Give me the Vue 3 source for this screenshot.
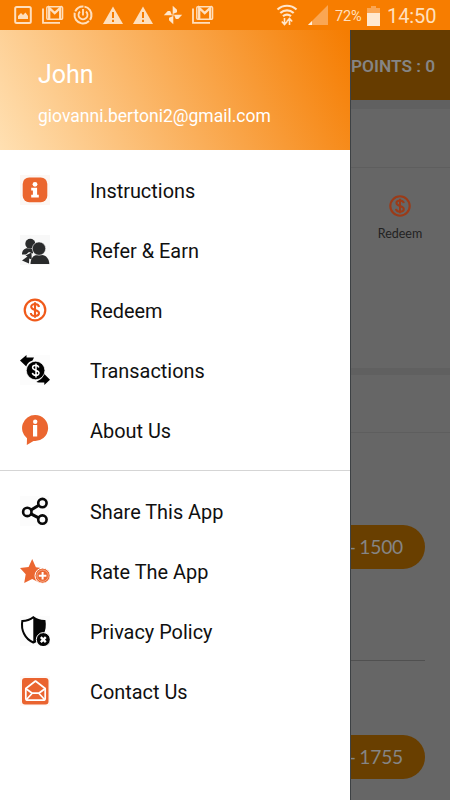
<script setup>
const statusIcons = ['image', 'mail', 'power', 'warn', 'warn', 'fan', 'mail']

const groups = [
  [
    { icon: 'info', label: 'Instructions' },
    { icon: 'refer', label: 'Refer & Earn' },
    { icon: 'redeem', label: 'Redeem' },
    { icon: 'transfer', label: 'Transactions' },
    { icon: 'about', label: 'About Us' },
  ],
  [
    { icon: 'share', label: 'Share This App' },
    { icon: 'rate', label: 'Rate The App' },
    { icon: 'privacy', label: 'Privacy Policy' },
    { icon: 'contact', label: 'Contact Us' },
  ],
]
</script>

<template>
  <div class="screen">
    <header class="status">
      <div class="notifications">
        <svg v-for="(s, i) in statusIcons" :key="i" width="30" height="30" viewBox="0 0 30 30">
          <g v-if="s === 'image'">
            <rect x="7.2" y="7" width="15.6" height="16" rx="1.5" fill="none" stroke="#ffdfbd" stroke-width="2" />
            <path d="M10 19v-3l3-3 2 2 2.500-2.500L20 16v3z" fill="#ffdfbd" />
          </g>
          <g v-else-if="s === 'mail'" fill="none" stroke="#ffdfbd">
            <path d="M5 8.500v14.300h17" stroke-width="1.800" />
            <rect x="8.800" y="6.700" width="15.800" height="12.600" rx="1" stroke-width="1.400" />
            <path d="M11.200 19V8l5.500 5.200L22.200 8v11" stroke-width="2.300" />
          </g>
          <g v-else-if="s === 'power'" fill="none" stroke="#ffdfbd">
            <circle cx="15" cy="15" r="8.500" stroke-width="2" stroke-dasharray="17 1.500 22 1.500 10 1.400" transform="rotate(-80 15 15)" />
            <path d="M12 11.500a4.500 4.500 0 1 0 6 0M15 9v6.500" stroke-width="1.800" />
          </g>
          <g v-else-if="s === 'warn'">
            <path d="M15 6.500 25 24H5z" fill="#ffdfbd" />
            <path d="M15 12v6M15 19.800v2.200" stroke="#f57c00" stroke-width="2" />
          </g>
          <g v-else fill="#ffe6cb">
            <path
              v-for="a in [0, 90, 180, 270]"
              :key="a"
              d="M15.300 15.300h-.6V5.800l4.300 4v2.400l-3.700 1.600z"
              :transform="`rotate(${a} 15 15)`"
            />
          </g>
        </svg>
      </div>
      <div class="system">
        <svg class="wifi" width="22" height="24" viewBox="0 0 22 24" fill="none" stroke="#ffe6cb">
          <path d="M1.500 6.500c5.500-5 13.500-5 19 0M4.300 10c4-3.600 9.400-3.600 13.400 0M7 13.200c2.400-2 5.600-2 8 0" stroke-width="2.200" />
          <path d="M8.500 15v6M5.800 18.500l2.700 3 2.700-3M13.500 22v-6M10.800 18.500l2.700-3 2.700 3" stroke-width="1.600" />
        </svg>
        <svg class="signal" width="20" height="20" viewBox="0 0 20 20">
          <path d="M20 0v20H0z" fill="#faa653" />
          <path d="M4 16v4H0z" fill="#fff0df" />
        </svg>
        <span class="percent">72%</span>
        <svg class="battery" width="13" height="20" viewBox="0 0 13 20">
          <path d="M4 0h5v2h4v5H0V2h4z" fill="#faa653" />
          <path d="M0 7h13v13H0z" fill="#ffe9d0" />
        </svg>
        <span class="clock">14:50</span>
      </div>
    </header>

    <div class="body">
      <aside class="drawer">
        <div class="profile">
          <div class="name">John</div>
          <div class="email">giovanni.bertoni2@gmail.com</div>
        </div>
        <nav v-for="(group, g) in groups" :key="g" class="group">
          <a v-for="item in group" :key="item.label" class="item">
            <svg class="icon" width="30" height="30" viewBox="0 0 30 30">
              <g v-if="item.icon === 'info'">
                <rect width="30" height="30" fill="#fcf7f4" />
                <rect x="2.700" y="2.400" width="24.600" height="24.800" rx="6.500" fill="#eb652d" />
                <circle cx="15" cy="9.300" r="2.400" fill="#fff" />
                <path d="M11.200 12.700h5.900v7.100h1.700v2.800h-7.600v-2.800h1.700v-4.400h-1.700z" fill="#fff" />
              </g>
              <g v-else-if="item.icon === 'refer'">
                <rect width="30" height="30" fill="#f8f8f8" />
                <g fill="#292a2b">
                  <circle cx="10.300" cy="8.800" r="5" />
                  <path d="M2 19.500c0-4 2.200-6.300 5.500-6.300l5.500 1v4.300l-4-1.500-3 2.500z" />
                  <path d="M11.500 17.500 5.500 20.500l2 1L2 25.500l7 3 .2-5 2.500 1z" />
                  <path d="M10.500 29c0-5 2.500-9 6.500-9h5c4 0 7.300 4 7.300 9z" />
                  <circle cx="19" cy="13.600" r="6.700" stroke="#f8f8f8" stroke-width=".6" />
                </g>
              </g>
              <g v-else-if="item.icon === 'redeem'" fill="none" stroke="#f05a1a">
                <circle cx="15" cy="15" r="10.300" stroke-width="2.200" />
                <path d="M19 12c-.5-4-7.800-3.800-7.800-.2 0 4 7.800 2.300 7.800 6.300 0 3.800-7.800 3.900-8.200-.1M15 7.200v15.600" stroke-width="2.100" />
              </g>
              <g v-else-if="item.icon === 'transfer'">
                <rect width="30" height="30" fill="#fcfcfc" />
                <path d="M0 5.500 6.500 0v2.600c3-.2 5-.3 7.500-.1l-1.500 3C9 6.800 7.500 8 6.300 11.500L0 5.500zM30 24.800 24.300 30v-2.600c-3 .3-6 .1-8-.4l3-2c2.500-1 4-3.200 4.500-6.500z" />
                <circle cx="15.600" cy="15.500" r="9.300" stroke="#fcfcfc" stroke-width=".7" />
                <path d="M18.800 12.500c-.7-3.300-6.200-2.900-6.200 0 0 3.400 6.400 2 6.400 5.500 0 3.200-6.200 3.200-6.600-.1M16 8.400v14.200" fill="none" stroke="#fff" stroke-width="1.500" />
              </g>
              <g v-else-if="item.icon === 'about'">
                <path d="M15 0a13 13 0 1 1-1.500 25.900L6.800 30l.2-6.800A13 13 0 0 1 15 0z" fill="#eb6630" />
                <circle cx="15.200" cy="6.800" r="2.200" fill="#fff" />
                <path d="M13 10h4.200v11.500H13z" fill="#fff" />
              </g>
              <g v-else-if="item.icon === 'share'" fill="none" stroke="#080808" stroke-width="2.600">
                <rect width="29" height="30" fill="#fcfcfc" stroke="none" />
                <path d="m11 14 7.800-4.700M11 17.800l7.600 4" stroke-width="3" />
                <circle cx="22.400" cy="7.100" r="4.200" />
                <circle cx="7.300" cy="15.900" r="4.200" />
                <circle cx="22.400" cy="23.600" r="4.200" />
              </g>
              <g v-else-if="item.icon === 'rate'">
                <path d="m12.200 3 3.700 8.300 9 1.100-6.600 6.100 1.800 8.600-7.900-4.200-8 4.100 1.500-8.700L0 12l8.600-1z" fill="#eb6630" />
                <circle cx="22.600" cy="19.700" r="7.600" fill="#eb6630" stroke="#fff" stroke-width="1" />
                <circle cx="22.600" cy="19.700" r="5.700" fill="none" stroke="#fff" stroke-width=".4" />
                <path d="M18.800 19.700h7.600M22.600 15.900v7.600" stroke="#fff" stroke-width="2" />
              </g>
              <g v-else-if="item.icon === 'privacy'">
                <rect width="30" height="30" fill="#fcfcfc" />
                <path d="M13.300 1.300C10.500 3.500 6 5 2.300 5c-1.500 9 2.500 18 11 21.500C22 23 26 14 24.500 5c-4 0-8.500-1.500-11.200-3.700z" fill="#fff" stroke="#050505" stroke-width="2" />
                <path d="M13.300 1.300C16 3.500 20.500 5 24.500 5 26 14 22 23 13.300 26.500z" fill="#050505" />
                <circle cx="23.300" cy="23.600" r="7" fill="#050505" stroke="#fcfcfc" stroke-width="1" />
                <path d="m20.800 21.100 5 5m0-5-5 5" stroke="#fff" stroke-width="2.300" />
              </g>
              <g v-else>
                <rect width="30" height="30" fill="#fff9f6" />
                <rect x="2" y="2" width="26.500" height="26.500" rx="3" fill="#ea6430" />
                <g fill="none" stroke="#fff" stroke-width="1.700" stroke-linejoin="round">
                  <path d="M5.800 12.500 15.500 5l9.700 7.500v9.700a2 2 0 0 1-2 2H7.800a2 2 0 0 1-2-2z" />
                  <path d="m6 12.700 6.200 4.500h6.600l6.200-4.500M6.500 23.500l5.700-6.300M24.500 23.500l-5.700-6.300" />
                </g>
              </g>
            </svg>
            <span class="label">{{ item.label }}</span>
          </a>
        </nav>
      </aside>

      <main class="page">
        <div class="appbar">POINTS : 0</div>
        <section class="title-card"></section>
        <section class="actions">
          <svg width="22" height="22" viewBox="0 0 22 22" fill="none" stroke="#9b3b18">
            <circle cx="11" cy="11" r="9.700" stroke-width="2.100" />
            <path d="M14.800 8.200c-.5-3.800-7.400-3.600-7.400-.2 0 3.800 7.400 2.200 7.400 6 0 3.600-7.400 3.700-7.800-.1M11 3.700v14.600" stroke-width="2" />
          </svg>
          <span>Redeem</span>
        </section>
        <section class="offers">
          <div class="offers-head"></div>
          <div class="offer"><span class="pill">- 1500</span></div>
          <div class="offer"><span class="pill">- 1755</span></div>
        </section>
      </main>
    </div>
  </div>
</template>

<style>
body {
  margin: 0;
}
</style>

<style scoped>
.screen {
  width: 450px;
  height: 800px;
  display: flex;
  flex-direction: column;
  overflow: hidden;
  font-family: Roboto, "Liberation Sans", sans-serif;
}
.screen * {
  box-sizing: border-box;
}
svg {
  display: block;
  flex: none;
}
.status {
  height: 30px;
  flex: none;
  display: flex;
  justify-content: space-between;
  background: #f77d00;
  color: #ffe0bf;
}
.notifications {
  display: flex;
  padding-left: 8px;
}
.system {
  display: flex;
  align-items: center;
  padding-right: 13px;
}
.signal {
  margin: 0 7px 0 10px;
}
.percent {
  width: 27px;
  padding-top: 2px;
  font-size: 14.5px;
  letter-spacing: -0.2px;
  white-space: nowrap;
}
.battery {
  margin: 2px 7px 0 5px;
}
.clock {
  width: 50px;
  padding-top: 2px;
  font-size: 20px;
  letter-spacing: -0.1px;
  white-space: nowrap;
}
.body {
  flex: 1;
  display: flex;
  min-height: 0;
}
.drawer {
  width: 350px;
  flex: none;
  background: #fff;
}
.profile {
  height: 120px;
  padding: 30px 0 0 38px;
  background: linear-gradient(63deg, #ffe0b2, #f57c00);
  color: #fff;
}
.name {
  font-size: 25px;
  line-height: 30px;
}
.email {
  margin-top: 14px;
  font-size: 17.5px;
  line-height: 24px;
}
.group {
  padding: 10px 0;
}
.group + .group {
  border-top: 1px solid #d5d5d5;
}
.item {
  height: 60px;
  padding-left: 20px;
  display: flex;
  align-items: center;
  gap: 40px;
  font-size: 19.9px;
  color: #101010;
}
.label {
  padding-top: 2px;
}
.page {
  width: 100px;
  display: flex;
  flex-direction: column;
  background: #666;
  border-left: 1px solid #3d4144;
  overflow: hidden;
}
.appbar {
  height: 70px;
  flex: none;
  display: flex;
  align-items: center;
  padding-top: 1px;
  background: #663c00;
  color: #858585;
  font-size: 17.3px;
  font-weight: 600;
  white-space: nowrap;
}
.title-card {
  height: 68px;
  flex: none;
  border-top: 9px solid #606060;
  border-bottom: 1px solid #5e5e5e;
}
.actions {
  height: 200px;
  flex: none;
  display: flex;
  flex-direction: column;
  align-items: center;
  gap: 9px;
  padding: 27px 1px 0 0;
  font: 12.5px/16px Lato, sans-serif;
  color: #222;
}
.offers {
  flex: 1;
  border-top: 7px solid #606060;
}
.offers-head {
  height: 58px;
  border-bottom: 1px solid #5e5e5e;
}
.offer {
  height: 228px;
  margin-right: 25px;
  padding-top: 92px;
  border-bottom: 1px solid #505050;
}
.offer + .offer {
  padding-top: 74px;
}
.pill {
  height: 44px;
  display: flex;
  align-items: center;
  justify-content: flex-end;
  padding-right: 22px;
  border-radius: 0 22px 22px 0;
  background: #693f00;
  color: #858585;
  font: 19.2px/24px Lato, sans-serif;
  letter-spacing: -0.2px;
  word-spacing: -1px;
  white-space: nowrap;
}
</style>
